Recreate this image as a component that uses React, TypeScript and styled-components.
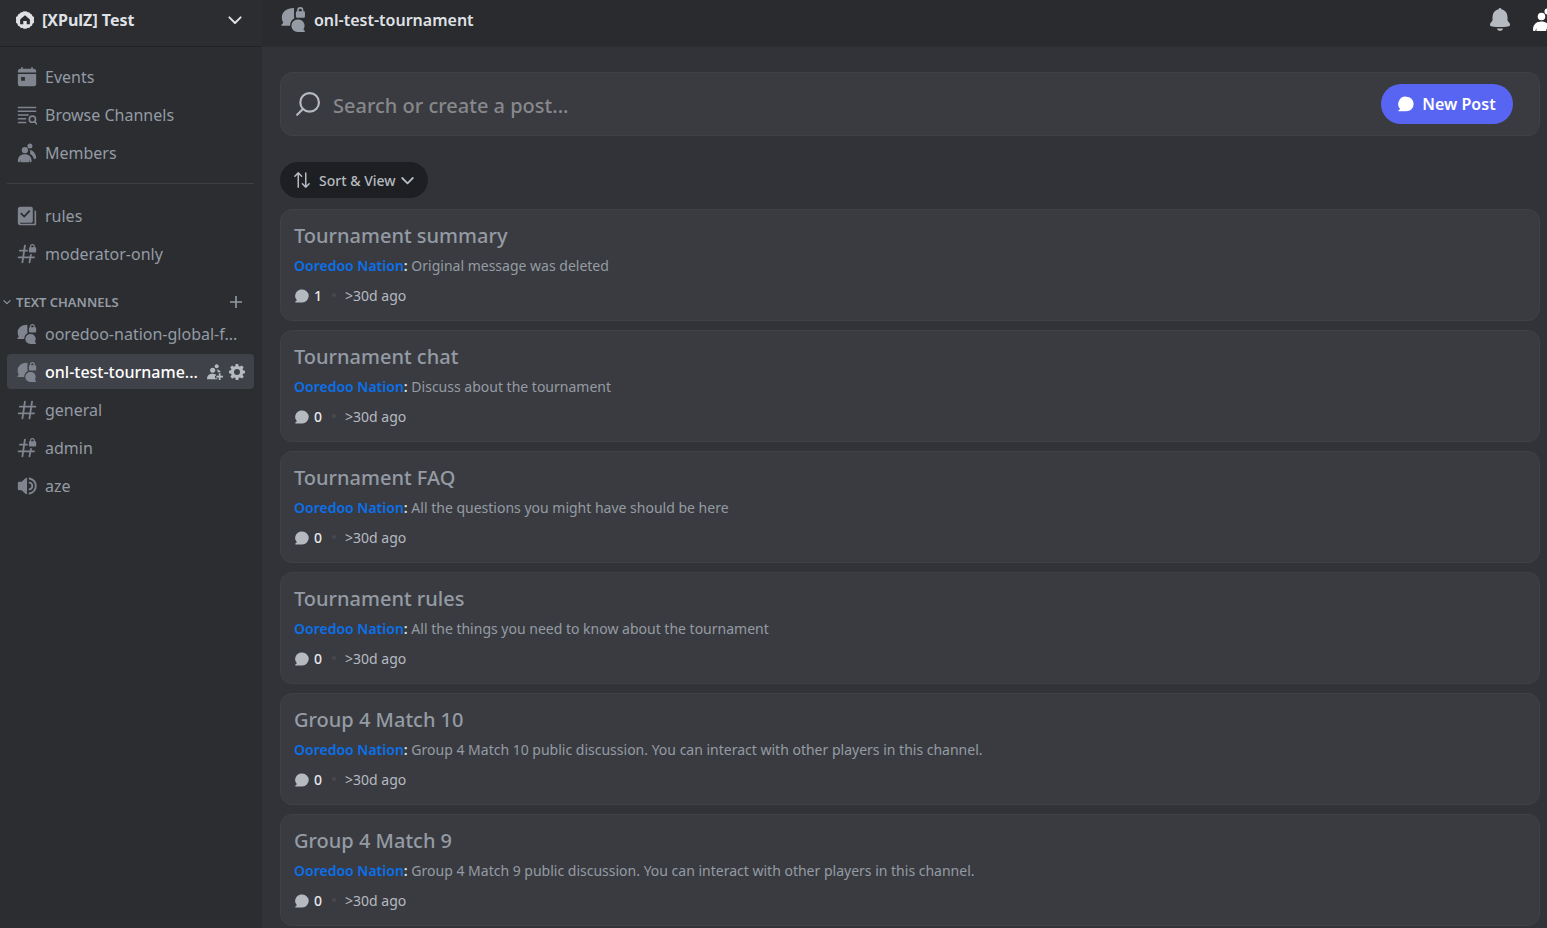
import React from "react";
import styled, { createGlobalStyle } from "styled-components";

const Global = createGlobalStyle`
  * { box-sizing: border-box; }
  html, body, #root { height: 100%; }
  body {
    margin: 0;
    background: #323338;
    color: #949ba4;
    font-family: "Noto Sans", "Open Sans", sans-serif;
    font-size: 16px;
    overflow: hidden;
  }
  button { font: inherit; color: inherit; border: 0; background: none; padding: 0; cursor: pointer; }
  h1, h2, p, ul { margin: 0; padding: 0; }
  ul { list-style: none; }
  svg { display: block; flex: none; }
`;

const Page = styled.div`
  display: flex;
  height: 100vh;
  overflow: hidden;
`;

const Sidebar = styled.nav`
  flex: none;
  width: 262px;
  background: #2b2d31;
`;

const ServerHeader = styled.button`
  display: flex;
  align-items: center;
  width: 100%;
  height: 47px;
  padding: 0 18px 7px 16px;
  gap: 8px;
  border-bottom: 1px solid #212226;
  color: #dfe1e5;
  font-size: 16px;
  font-weight: 700;
  text-align: left;
`;

const ServerName = styled.span`
  flex: 1;
`;

const ChannelList = styled.ul<{ $top: number }>`
  display: flex;
  flex-direction: column;
  gap: 3px;
  padding: ${(p) => p.$top}px 8px 0 7px;
`;

const ChannelRow = styled.li<{ $active?: boolean }>`
  display: flex;
  align-items: center;
  height: 35px;
  padding: 0 9px 0 10px;
  gap: 6px;
  border-radius: 4px;
  background: ${(p) => (p.$active ? "#404249" : "transparent")};
  color: #b5bac1;
`;

const ChannelLink = styled.a<{ $active?: boolean }>`
  display: flex;
  align-items: center;
  flex: 1;
  min-width: 0;
  gap: 8px;
  color: ${(p) => (p.$active ? "#ffffff" : "#949ba4")};
  font-weight: ${(p) => (p.$active ? 500 : 400)};
  line-height: 24px;
  text-decoration: none;
  white-space: nowrap;
  svg { color: #80848e; }
`;

const Divider = styled.hr`
  height: 1px;
  margin: 13px 8px 0 7px;
  border: 0;
  background: #3d3f45;
`;

const Category = styled.div`
  display: flex;
  align-items: center;
  justify-content: space-between;
  height: 20px;
  margin-top: 21px;
  padding: 0 18px 0 2px;
`;

const CategoryToggle = styled.button`
  display: flex;
  align-items: center;
  gap: 4px;
  font-size: 13px;
  font-weight: 600;
`;

const Main = styled.main`
  flex: 1;
  min-width: 0;
  background: #323338;
`;

const TopBar = styled.header`
  display: flex;
  align-items: center;
  height: 47px;
  padding: 0 0 7px 19px;
  background: #2a2b2f;
  border-bottom: 1px solid #2d2e32;
  overflow: hidden;
`;

const ChannelTitle = styled.h1`
  flex: 1;
  margin-left: 8px;
  color: #dfe1e5;
  font-size: 16px;
  font-weight: 600;
`;

const BarButton = styled.button<{ $color: string }>`
  flex: none;
  color: ${(p) => p.$color};
`;

const BarTools = styled.div`
  display: flex;
  flex: none;
  gap: 20px;
  width: 59px;
`;

const Content = styled.div`
  padding: 25px 7px 0 18px;
`;

const SearchCard = styled.form`
  display: flex;
  align-items: center;
  height: 64px;
  padding: 0 26px 0 14px;
  gap: 12px;
  background: #3a3b40;
  border: 1px solid #404147;
  border-radius: 12px;
  color: #b5bac1;
`;

const SearchInput = styled.input`
  flex: 1;
  min-width: 0;
  padding: 4px 0 0;
  border: 0;
  outline: 0;
  background: transparent;
  color: #dbdee1;
  font: 500 20px/28px "Noto Sans", "Open Sans", sans-serif;
  &::placeholder { color: #87888c; opacity: 1; }
`;

const NewPost = styled.button`
  display: flex;
  flex: none;
  align-items: center;
  justify-content: center;
  gap: 8px;
  width: 132px;
  height: 40px;
  && { background: #5865f2; color: #ffffff; }
  border-radius: 20px;
  font-size: 16px;
  font-weight: 600;
`;

const SortButton = styled.button`
  display: flex;
  align-items: center;
  height: 36px;
  margin: 26px 0 11px;
  padding: 0 12px 0 13px;
  && { background: #1e1f22; color: #b5bac1; }
  border-radius: 18px;
  font-size: 14px;
  font-weight: 500;
`;

const SortLabel = styled.span`
  margin: 0 3px 0 8px;
`;

const Posts = styled.ul`
  display: flex;
  flex-direction: column;
  gap: 9px;
`;

const PostCard = styled.li`
  height: 112px;
  padding: 12px 13px;
  background: #3a3b40;
  border: 1px solid #404147;
  border-radius: 12px;
`;

const PostTitle = styled.h2`
  color: #949ba4;
  font-size: 20px;
  line-height: 28px;
  font-weight: 500;
`;

const PostPreview = styled.p`
  margin-top: 6px;
  font-size: 14px;
  line-height: 20px;
`;

const Author = styled.a`
  color: #0a70ea;
  font-weight: 600;
  text-decoration: none;
`;

const Colon = styled.b`
  color: #dfe1e5;
  font-weight: 600;
`;

const PostMeta = styled.div`
  display: flex;
  align-items: center;
  margin-top: 10px;
  padding-left: 1px;
  color: #b5bac1;
  font-size: 14px;
  line-height: 20px;
`;

const Count = styled.span`
  margin-left: 5px;
  color: #e6e8eb;
  font-weight: 500;
`;

const Dot = styled.span`
  width: 4px;
  height: 4px;
  margin: 0 9px 2px 10px;
  border-radius: 2px;
  background: #46484e;
`;

const Tools = styled.div`
  display: flex;
  gap: 6px;
`;

type IconProps = { size?: number; children: React.ReactNode };
const Icon = ({ size = 20, children }: IconProps) => (
  <svg width={size} height={size} viewBox="0 0 24 24" fill="currentColor" aria-hidden="true">
    {children}
  </svg>
);
const line = { fill: "none", stroke: "currentColor", strokeLinecap: "round", strokeLinejoin: "round" } as const;
const lockPath =
  "M18.500 0a3 3 0 0 0-3 3v1a1.200 1.200 0 0 0-1.200 1.200V9A1.200 1.200 0 0 0 15.500 10.200h6.300A1.200 1.200 0 0 0 23 9V5.200A1.200 1.200 0 0 0 21.800 4h-.3V3a3 3 0 0 0-3-3Zm0 1.600A1.500 1.500 0 0 1 20 3.100V4h-3v-.9a1.500 1.500 0 0 1 1.500-1.500Z";

const Lock = () => <path fillRule="evenodd" d={lockPath} />;

const CalendarIcon = () => (
  <Icon>
    <path d="M1 6.500V5a3 3 0 0 1 3-3h1V1a1 1 0 0 1 2 0v1h10V1a1 1 0 0 1 2 0v1h1a3 3 0 0 1 3 3v1.500Z" />
    <path fillRule="evenodd" d="M1 8.500h22V20a3 3 0 0 1-3 3H4a3 3 0 0 1-3-3ZM5 12v4.500h4.500V12Z" />
  </Icon>
);
const BrowseIcon = () => (
  <Icon>
    <path {...line} strokeLinecap="butt" strokeWidth="2" d="M1 3h22M1 7.500h22M1 12h13M1 16.500h10M1 21h10" />
    <circle {...line} strokeWidth="2" cx="18.500" cy="17" r="3.700" />
    <path {...line} strokeWidth="2" d="m21.200 20 2.600 2.700" />
  </Icon>
);
const MembersIcon = ({ size = 20 }: { size?: number }) => (
  <Icon size={size}>
    <circle cx="9.500" cy="8.500" r="3.800" />
    <circle cx="15.500" cy="3.500" r="3" />
    <path d="M15 8c5 1 8 5.500 8 9.500 0 1.300-1 2-2.500 2-.8-2.800-2.500-5-5-6.500.8-1.700.5-3.500-.5-5Z" />
    <path d="M1 22c0-5.500 3.200-8.500 8.300-8.500s8.300 3 8.300 8.500c0 .6-.4 1-1 1h-1.300l-.8-3-.3 3H4.500l-.3-3-.8 3H2c-.6 0-1-.4-1-1Z" />
  </Icon>
);
const InviteIcon = () => (
  <Icon size={16}>
    <circle cx="8.500" cy="9.500" r="3.800" />
    <circle cx="14.500" cy="3.500" r="3" />
    <path d="M14.500 8c3.500.5 5.500 2.500 6.200 4.500h-4.700c.1-1.800-.3-3.200-1.500-4.500Z" />
    <path d="M0 23c0-6 3.500-8.500 8.500-8.500 2 0 3.500.5 5 1.500v1.500h-1.500v4h3.500V23Z" />
    <path {...line} strokeLinecap="butt" strokeWidth="2.600" d="M19 14v10M14 19h10" />
  </Icon>
);
const RulesIcon = () => (
  <Icon>
    <path fillRule="evenodd" d="M4 1h13a2 2 0 0 1 2 2v15a2 2 0 0 1-2 2H4a1 1 0 0 0 0 1.300h17V5a2.300 2.300 0 0 1 2 2v14.500a1.500 1.500 0 0 1-1.500 1.500H4a3 3 0 0 1-3-3V4a3 3 0 0 1 3-3Zm1.200 6.800L3.800 9.300 8.700 14l7.400-7.700-1.600-1.500-5.900 6.200Z" />
  </Icon>
);
const HashIcon = () => (
  <Icon>
    <path {...line} strokeWidth="2.200" d="M9.500 2 6.500 22M18 2l-3 20M3.500 8H22M2 16h18.500" />
  </Icon>
);
const HashLockIcon = () => (
  <Icon>
    <path {...line} strokeWidth="2.200" d="M9.500 2 6.500 22M16.700 13l-1.700 9M3.500 8H12M2 16h18.500" />
    <Lock />
  </Icon>
);
const ForumLockIcon = ({ size = 20 }: { size?: number }) => (
  <Icon size={size}>
    <path d="M12.500 1v8.500a3 3 0 0 0 .5 1.400A8 8 0 0 0 8.700 18H1.300C.5 18 0 17 .8 16.500l1.400-1.300C1.200 13.500.800 11.500.800 9.800.8 4.500 6 .8 12.500 1Z" />
    <path d="M16 12a6 6 0 1 0 0 12h6c.9 0 1.200-.9.600-1.500l-1.100-1.100A6 6 0 0 0 16 12Z" />
    <Lock />
  </Icon>
);
const VoiceIcon = () => (
  <Icon>
    <path d="M10.500 2.300 5.500 7H2a1 1 0 0 0-1 1v8a1 1 0 0 0 1 1h3.500l5 4.700c.6.600 1.500.200 1.500-.7V3c0-.9-.9-1.300-1.500-.7Z" />
    <path {...line} strokeWidth="2.200" d="M15 3c10 2.500 10 15.500 0 18M15 8c4.500 1 4.500 7 0 8" />
  </Icon>
);
const GearIcon = () => (
  <Icon size={16}>
    <path
      fillRule="evenodd"
      d="m10 0-.8 3.300-1.700.7-2.900-1.800-2.700 2.800L3.700 7.800 3 9.500l-3 .7v3.800l3.200.8.700 1.700-1.800 2.800 2.700 2.700 2.900-1.700 1.700.7.700 3h3.900l.8-3.200 1.700-.7 2.900 1.700 2.700-2.700-1.800-2.900.7-1.600 3.200-.8V10l-3.200-.8-.7-1.600L21.900 5l-2.700-2.800-2.900 1.700-1.700-.7L13.800 0Zm2 7.500a4.500 4.500 0 1 1 0 9 4.500 4.500 0 0 1 0-9Z"
    />
  </Icon>
);
const BadgeIcon = () => (
  <Icon size={18}>
    <path
      fillRule="evenodd"
      d="M12 .5a3 3 0 0 1 3.500 1.200 3 3 0 0 1 3.700 2 3 3 0 0 1 2.600 3.200A3 3 0 0 1 23.500 12a3 3 0 0 1-1.600 5 3 3 0 0 1-2.600 3.300 3 3 0 0 1-3.800 2A3 3 0 0 1 12 23.500a3 3 0 0 1-3.500-1.200 3 3 0 0 1-3.800-2A3 3 0 0 1 2.100 17a3 3 0 0 1-1.600-5 3 3 0 0 1 1.600-5.100 3 3 0 0 1 2.700-3.200 3 3 0 0 1 3.700-2A3 3 0 0 1 12 .5Zm0 5-6.500 5.700V17.500h4.200v-4.200h4.600v4.200h4.200v-6.300Z"
    />
  </Icon>
);
const ChevronIcon = ({ size = 18, width = 2.600 }: { size?: number; width?: number }) => (
  <Icon size={size}>
    <path {...line} strokeWidth={width} d="m4.500 8.500 7.500 7.500 7.500-7.500" />
  </Icon>
);
const PlusIcon = () => (
  <Icon size={16}>
    <path {...line} strokeLinecap="butt" strokeWidth="2.400" d="M12 3v18M3 12h18" />
  </Icon>
);
const BellIcon = () => (
  <Icon size={24}>
    <path d="M12 0c-.8 0-1.300.6-1.500 1.300A7.500 7.500 0 0 0 4.500 9v3.500l-2.300 3c-.8 1.600 0 3 2 3 5 .8 10.600.8 15.600 0 2 0 2.800-1.400 2-3l-2.300-3V9a7.500 7.500 0 0 0-6-7.700C13.300.6 12.800 0 12 0ZM8.800 20.400a3.300 3.300 0 0 0 6.400 0Z" />
  </Icon>
);
const SearchIcon = () => (
  <Icon size={26}>
    <circle {...line} strokeWidth="2" cx="13.500" cy="10.500" r="8.600" />
    <path {...line} strokeWidth="2" d="m7.300 16.700-5.300 5.300" />
  </Icon>
);
const ChatIcon = ({ size }: { size: number }) => (
  <Icon size={size}>
    <path d="M12.500 1A11 11 0 1 1 12.500 23H1.500C.5 23 .2 21.800 1 21.200l2.300-1.800A11 11 0 0 1 12.500 1Z" />
  </Icon>
);
const SortIcon = () => (
  <Icon size={18}>
    <path {...line} strokeWidth="2" d="M7 21.500V2.500M2.500 7 7 2.500 11.500 7M17 2.500v19M12.500 17l4.500 4.500 4.500-4.500" />
  </Icon>
);

type Channel = { name: string; icon: React.ReactNode; active?: boolean };

const Channels = ({ items, top }: { items: Channel[]; top: number }) => (
  <ChannelList $top={top}>
    {items.map((c) => (
      <ChannelRow key={c.name} $active={c.active}>
        <ChannelLink href="#" $active={c.active}>
          {c.icon}
          <span>{c.name}</span>
        </ChannelLink>
        {c.active && (
          <Tools>
            <button aria-label="Create invite"><InviteIcon /></button>
            <button aria-label="Edit channel"><GearIcon /></button>
          </Tools>
        )}
      </ChannelRow>
    ))}
  </ChannelList>
);

const nav: Channel[] = [
  { name: "Events", icon: <CalendarIcon /> },
  { name: "Browse Channels", icon: <BrowseIcon /> },
  { name: "Members", icon: <MembersIcon /> },
];
const pinned: Channel[] = [
  { name: "rules", icon: <RulesIcon /> },
  { name: "moderator-only", icon: <HashLockIcon /> },
];
const channels: Channel[] = [
  { name: "ooredoo-nation-global-f...", icon: <ForumLockIcon /> },
  { name: "onl-test-tourname...", icon: <ForumLockIcon />, active: true },
  { name: "general", icon: <HashIcon /> },
  { name: "admin", icon: <HashLockIcon /> },
  { name: "aze", icon: <VoiceIcon /> },
];
const posts = [
  { title: "Tournament summary", text: "Original message was deleted", count: 1 },
  { title: "Tournament chat", text: "Discuss about the tournament", count: 0 },
  { title: "Tournament FAQ", text: "All the questions you might have should be here", count: 0 },
  { title: "Tournament rules", text: "All the things you need to know about the tournament", count: 0 },
  { title: "Group 4 Match 10", text: "Group 4 Match 10 public discussion. You can interact with other players in this channel.", count: 0 },
  { title: "Group 4 Match 9", text: "Group 4 Match 9 public discussion. You can interact with other players in this channel.", count: 0 },
];

export default function App() {
  return (
    <Page>
      <Global />
      <Sidebar>
        <ServerHeader>
          <BadgeIcon />
          <ServerName>[XPulZ] Test</ServerName>
          <ChevronIcon />
        </ServerHeader>
        <Channels items={nav} top={12} />
        <Divider />
        <Channels items={pinned} top={14} />
        <Category>
          <CategoryToggle>
            <ChevronIcon size={10} />
            TEXT CHANNELS
          </CategoryToggle>
          <button aria-label="Create channel"><PlusIcon /></button>
        </Category>
        <Channels items={channels} top={4} />
      </Sidebar>
      <Main>
        <TopBar>
          <ForumLockIcon size={25} />
          <ChannelTitle>onl-test-tournament</ChannelTitle>
          <BarTools>
            <BarButton $color="#b5bac1" aria-label="Notifications"><BellIcon /></BarButton>
            <BarButton $color="#ffffff" aria-label="Members"><MembersIcon size={24} /></BarButton>
          </BarTools>
        </TopBar>
        <Content>
          <SearchCard>
            <SearchIcon />
            <SearchInput aria-label="Search or create a post" placeholder="Search or create a post..." />
            <NewPost type="button">
              <ChatIcon size={16} />
              New Post
            </NewPost>
          </SearchCard>
          <SortButton>
            <SortIcon />
            <SortLabel>Sort &amp; View</SortLabel>
            <ChevronIcon size={17} />
          </SortButton>
          <Posts>
            {posts.map((p) => (
              <PostCard key={p.title}>
                <PostTitle>{p.title}</PostTitle>
                <PostPreview>
                  <Author href="#">Ooredoo Nation</Author>
                  <Colon>:</Colon> {p.text}
                </PostPreview>
                <PostMeta>
                  <ChatIcon size={14} />
                  <Count>{p.count}</Count>
                  <Dot />
                  <span>&gt;30d ago</span>
                </PostMeta>
              </PostCard>
            ))}
          </Posts>
        </Content>
      </Main>
    </Page>
  );
}
